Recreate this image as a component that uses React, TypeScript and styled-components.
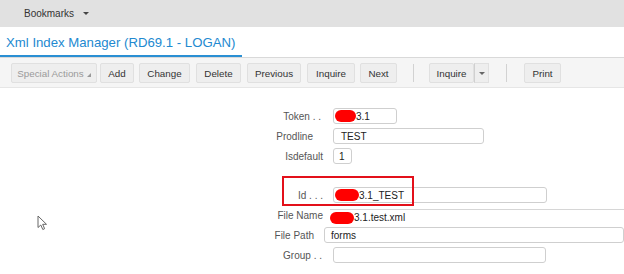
import React from "react";
import styled, { createGlobalStyle } from "styled-components";

const Global = createGlobalStyle`
  html, body { margin: 0; padding: 0; background: #fff; }
  body { font-family: "Liberation Sans", Arial, sans-serif; width: 624px; height: 274px; overflow: hidden; }
`;

const Page = styled.div`
  display: flex;
  flex-direction: column;
  width: 624px;
  height: 274px;
  position: relative;
  white-space: nowrap;
`;

const TopBar = styled.div`
  height: 27px;
  background: #e1e1e1;
  display: flex;
  align-items: center;
  padding-left: 24px;
  font-size: 10px;
  color: #333;
  box-sizing: border-box;
`;

const Caret = styled.span`
  display: inline-block;
  margin-left: 9px;
  width: 0;
  height: 0;
  border-left: 3px solid transparent;
  border-right: 3px solid transparent;
  border-top: 3px solid #444;
`;

const TitleRow = styled.div`
  height: 30px;
  display: flex;
`;

const Title = styled.div`
  box-sizing: border-box;
  height: 30px;
  width: 242px;
  padding: 2px 0 0 6px;
  display: flex;
  align-items: center;
  border-bottom: 2px solid #2a8fd3;
  color: #2289d0;
  font-size: 13.2px;
`;

const Toolbar = styled.div`
  box-sizing: border-box;
  height: 31px;
  background: #f5f5f5;
  border-top: 1px solid #d9d9d9;
  border-bottom: 1px solid #e6e6e6;
  display: flex;
  align-items: flex-start;
  padding: 5px 0 0 11px;
`;

const Btn = styled.div<{ $w: number; $ml?: number; $muted?: boolean }>`
  box-sizing: border-box;
  width: ${(p) => p.$w}px;
  height: 20px;
  margin-left: ${(p) => p.$ml ?? 0}px;
  background: #eeeeee;
  border: 1px solid #e0e0e0;
  border-radius: 2px;
  display: flex;
  align-items: center;
  justify-content: center;
  font-size: 9.8px;
  color: ${(p) => (p.$muted ? "#9a9a9a" : "#333")};
`;

const Corner = styled.span`
  display: inline-block;
  margin-left: 3px;
  margin-top: 4px;
  width: 0;
  height: 0;
  border-left: 4px solid transparent;
  border-bottom: 4px solid #999;
`;

const SplitArrow = styled.div`
  box-sizing: border-box;
  width: 15px;
  height: 20px;
  background: #eeeeee;
  border: 1px solid #e0e0e0;
  border-left: 1px solid #d0d0d0;
  display: flex;
  align-items: center;
  justify-content: center;
`;

const SmallCaret = styled.span`
  width: 0;
  height: 0;
  border-left: 3px solid transparent;
  border-right: 3px solid transparent;
  border-top: 3px solid #666;
`;

const Sep = styled.div<{ $ml: number }>`
  width: 1px;
  height: 18px;
  margin-top: 1px;
  margin-left: ${(p) => p.$ml}px;
  background: #d2d2d2;
`;

const Form = styled.div`
  display: flex;
  flex-direction: column;
  padding-top: 18px;
`;

const Row = styled.div<{ $mt?: number }>`
  position: relative;
  display: flex;
  align-items: center;
  height: 20px;
  margin-top: ${(p) => p.$mt ?? 0}px;
`;

const Label = styled.div<{ $end: number }>`
  box-sizing: border-box;
  width: ${(p) => p.$end}px;
  text-align: right;
  font-size: 10px;
  color: #555;
`;

const Field = styled.div<{ $left: number; $w: number }>`
  box-sizing: border-box;
  margin-left: ${(p) => p.$left}px;
  width: ${(p) => p.$w}px;
  height: 16px;
  border: 1px solid #cfcfcf;
  border-radius: 3px;
  display: flex;
  align-items: center;
  padding-left: 1px;
  font-size: 10px;
  color: #222;
  flex-shrink: 0;
`;

const PlainField = styled.div<{ $left: number }>`
  box-sizing: border-box;
  margin-left: ${(p) => p.$left}px;
  flex: 1;
  height: 16px;
  margin-top: 4px;
  border-top: 1px solid #d6d6d6;
  display: flex;
  align-items: center;
  font-size: 10px;
  color: #222;
`;

const Blob = styled.span<{ $w: number }>`
  display: inline-block;
  width: ${(p) => p.$w}px;
  height: 12px;
  border-radius: 7px;
  background: #f00;
`;

const Text = styled.span<{ $pl?: number }>`
  padding-left: ${(p) => p.$pl ?? 0}px;
`;

const Highlight = styled.div`
  position: absolute;
  left: 282px;
  top: -9px;
  width: 132px;
  height: 30px;
  border: 2px solid #e3101a;
  box-sizing: border-box;
  pointer-events: none;
`;

const Cursor = styled.svg`
  position: absolute;
  left: 37px;
  top: 215px;
`;

export default function App() {
  return (
    <Page>
      <Global />
      <TopBar>
        Bookmarks
        <Caret />
      </TopBar>
      <TitleRow>
        <Title>Xml Index Manager (RD69.1 - LOGAN)</Title>
      </TitleRow>
      <Toolbar>
        <Btn $w={86} $muted>
          Special Actions
          <Corner />
        </Btn>
        <Btn $w={34} $ml={3}>Add</Btn>
        <Btn $w={51} $ml={5}>Change</Btn>
        <Btn $w={45} $ml={6}>Delete</Btn>
        <Btn $w={54} $ml={6}>Previous</Btn>
        <Btn $w={48} $ml={6}>Inquire</Btn>
        <Btn $w={37} $ml={5}>Next</Btn>
        <Sep $ml={16} />
        <Btn $w={45} $ml={15}>Inquire</Btn>
        <SplitArrow>
          <SmallCaret />
        </SplitArrow>
        <Sep $ml={17} />
        <Btn $w={37} $ml={17}>Print</Btn>
      </Toolbar>
      <Form>
        <Row>
          <Label $end={321}>Token . .</Label>
          <Field $left={12} $w={64}>
            <Blob $w={21} />
            <Text>3.1</Text>
          </Field>
        </Row>
        <Row>
          <Label $end={313}>Prodline</Label>
          <Field $left={20} $w={151}>
            <Text $pl={6}>TEST</Text>
          </Field>
        </Row>
        <Row>
          <Label $end={323}>Isdefault</Label>
          <Field $left={10} $w={19}>
            <Text $pl={4}>1</Text>
          </Field>
        </Row>
        <Row $mt={19}>
          <Highlight />
          <Label $end={323}>Id . . .</Label>
          <Field $left={10} $w={214}>
            <Blob $w={24} />
            <Text>3.1_TEST</Text>
          </Field>
        </Row>
        <Row>
          <Label $end={323}>File Name</Label>
          <PlainField $left={7}>
            <Blob $w={24} />
            <Text>3.1.test.xml</Text>
          </PlainField>
        </Row>
        <Row>
          <Label $end={323}>File Path</Label>
          <Field $left={10} $w={300}>
            <Text $pl={5}>forms</Text>
          </Field>
        </Row>
        <Row>
          <Label $end={322}>Group . .</Label>
          <Field $left={11} $w={213} />
        </Row>
      </Form>
      <Cursor width="12" height="16" viewBox="0 0 12 16">
        <path
          d="M1 1 L1 12.5 L3.8 10 L5.8 14.5 L7.6 13.7 L5.7 9.3 L9.5 9.3 Z"
          fill="#fff"
          stroke="#666"
          strokeWidth="1"
          strokeLinejoin="round"
        />
      </Cursor>
    </Page>
  );
}
